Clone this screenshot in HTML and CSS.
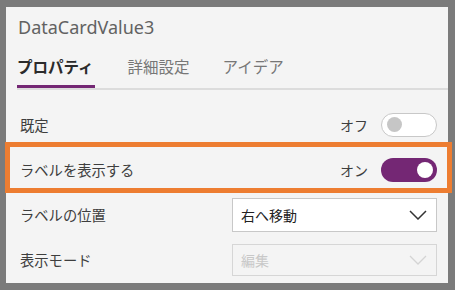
FILE: index.html
```html
<!DOCTYPE html>
<html lang="ja">
<head>
<meta charset="utf-8">
<link rel="stylesheet" href="styles.css">
</head>
<body>
<div class="panel">
  <div class="title">DataCardValue3</div>
  <div class="tabs">
    <div class="tab active">プロパティ</div>
    <div class="tab">詳細設定</div>
    <div class="tab">アイデア</div>
  </div>
  <div class="rows">
    <div class="row">
      <span class="label">既定</span>
      <div class="ctrl">
        <span class="state">オフ</span>
        <span class="toggle off"><span class="knob"></span></span>
      </div>
    </div>
    <div class="row highlight">
      <span class="label">ラベルを表示する</span>
      <div class="ctrl">
        <span class="state">オン</span>
        <span class="toggle on"><span class="knob"></span></span>
      </div>
    </div>
    <div class="row">
      <span class="label">ラベルの位置</span>
      <div class="select">
        <span>右へ移動</span>
        <svg class="chev" width="18" height="10" viewBox="0 0 18 10"><path d="M1 1 L9 9 L17 1" fill="none" stroke="#333" stroke-width="1.5"/></svg>
      </div>
    </div>
    <div class="row">
      <span class="label">表示モード</span>
      <div class="select disabled">
        <span>編集</span>
        <svg class="chev" width="18" height="10" viewBox="0 0 18 10"><path d="M1 1 L9 9 L17 1" fill="none" stroke="#d4d4d4" stroke-width="1.3"/></svg>
      </div>
    </div>
  </div>
</div>
</body>
</html>
```
FILE: styles.css
```css
html, body {
  margin: 0;
  padding: 0;
}
body {
  background: #7b7b7b;
  width: 455px;
  height: 290px;
  overflow: hidden;
  font-family: "Noto Sans", "Noto Sans CJK JP", sans-serif;
}
.panel {
  margin: 7px 0 0 6px;
  width: 442px;
  height: 276px;
  background: #f4f4f4;
  display: flex;
  flex-direction: column;
}
.title {
  height: 38px;
  padding-left: 12px;
  display: flex;
  align-items: center;
  font-size: 18px;
  color: #626262;
  padding-top: 1px;
  box-sizing: border-box;
}
.tabs {
  display: flex;
  gap: 33px;
  margin-left: 11px;
  height: 45px;
  border-bottom: 2px solid #dcdcdc;
  box-sizing: border-box;
}
.tab {
  font-family: "Noto Sans CJK JP", sans-serif;
  font-size: 15.5px;
  color: #777;
  padding-top: 10px;
  box-sizing: border-box;
  height: 43px;
}
.tab.active {
  color: #2b2b2b;
  font-weight: bold;
  border-bottom: 3px solid #742774;
  padding-right: 1px;
}
.rows {
  display: flex;
  flex-direction: column;
  padding-top: 12px;
}
.row {
  height: 45px;
  display: flex;
  align-items: center;
  justify-content: space-between;
  padding: 0 11px 0 14px;
  position: relative;
}
.label {
  font-family: "Noto Sans CJK JP", sans-serif;
  font-size: 14.3px;
  color: #3e3e3e;
}
.highlight::after {
  content: "";
  position: absolute;
  left: -1px;
  right: -4px;
  top: -5px;
  height: 51px;
  border: 5px solid #ed7d31;
  box-sizing: border-box;
}
.ctrl {
  display: flex;
  align-items: center;
  gap: 13px;
}
.state {
  font-family: "Noto Sans CJK JP", sans-serif;
  font-size: 14px;
  color: #3e3e3e;
}
.toggle {
  width: 56px;
  height: 24px;
  border-radius: 12px;
  box-sizing: border-box;
  display: flex;
  align-items: center;
  padding: 0 4px;
}
.toggle.off {
  background: #fff;
  border: 1.5px solid #c8c8c8;
  justify-content: flex-start;
}
.toggle.off .knob {
  width: 15px;
  height: 15px;
  border-radius: 50%;
  background: #c6c6c6;
  margin-left: 1px;
}
.toggle.on {
  background: #742774;
  justify-content: flex-end;
}
.toggle.on .knob {
  width: 16px;
  height: 16px;
  border-radius: 50%;
  background: #fff;
}
.select {
  width: 205px;
  height: 34px;
  box-sizing: border-box;
  border: 1px solid #c8c8c8;
  background: #fff;
  display: flex;
  align-items: center;
  justify-content: space-between;
  padding: 0 9px 0 8px;
  font-family: "Noto Sans CJK JP", sans-serif;
  font-size: 14px;
  color: #222;
}
.select.disabled {
  background: #f4f4f4;
  border-color: #d6d6d6;
  color: #c8c8c8;
  height: 32px;
}
```
